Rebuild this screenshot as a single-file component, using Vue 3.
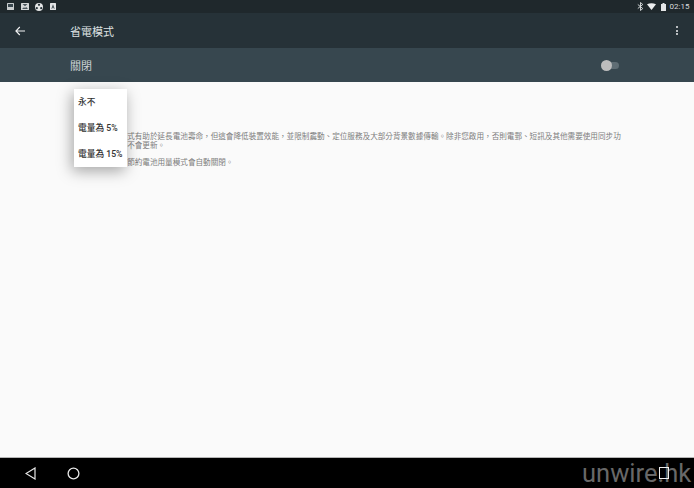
<template>
  <div class="screen">
    <div class="status-bar">
      <div class="status-left">
        <svg width="7" height="7" viewBox="0 0 7 7"><rect width="7" height="7" rx="0.500" fill="#c9cdcf" /><rect x="1" y="1" width="5" height="3" fill="#39474e" /></svg>
        <svg width="8" height="7" viewBox="0 0 8 7"><rect width="8" height="7" rx="0.500" fill="#d5d8d9" /><path d="M1.500 1h5L4 3.300zM1 6l2-1.800L4 5l1.200-1L7 6z" fill="#4a565c" /></svg>
        <svg width="8" height="8" viewBox="0 0 8 8"><circle cx="4" cy="4" r="4" fill="#e4e6e7" /><circle cx="4" cy="1.800" r="1.100" fill="#263238" /><circle cx="1.800" cy="5.200" r="1.100" fill="#263238" /><circle cx="6.200" cy="5.200" r="1.100" fill="#263238" /></svg>
        <svg width="6" height="7" viewBox="0 0 6 7"><rect width="6" height="7" rx="0.500" fill="#e4e6e7" /><path d="M3 1.300L1.300 5.700h.9l.3-.9h1l.3.9h.9z" fill="#4a565c" /></svg>
      </div>
      <div class="status-right">
        <svg class="bt" width="7" height="9" viewBox="0 0 7 9"><path d="M0.800 2.500l5 4-2.300 2V0.500l2.300 2-5 4" fill="none" stroke="#dfe2e3" stroke-width="0.900" /></svg>
        <svg class="wifi" width="9" height="7" viewBox="0 0 9 7"><path d="M0 1.300Q4.500-0.900 9 1.300L4.500 7z" fill="#eceeef" /></svg>
        <svg class="battery" width="5" height="8" viewBox="0 0 5 8"><path d="M1.500 0h2v1H5v7H0V1h1.500z" fill="#e4e6e7" /></svg>
        <span class="clock">02:15</span>
      </div>
    </div>

    <div class="toolbar">
      <svg class="back" width="10" height="10" viewBox="0 0 10 10"><path d="M10 5H1M4.800 1L0.900 5 4.800 9" fill="none" stroke="#f2f3f4" stroke-width="1.100" /></svg>
      <span class="title">省電模式</span>
      <div class="more"><i></i><i></i><i></i></div>
    </div>

    <div class="switch-bar">
      <span class="switch-label">關閉</span>
      <div class="switch"><div class="track"></div><div class="thumb"></div></div>
    </div>

    <div class="content">
      <p>節約電池用量模式有助於延長電池壽命，但這會降低裝置效能，並限制震動、定位服務及大部分背景數據傳輸。除非您啟用，否則電郵、短訊及其他需要使用同步功<br />能的應用程式將不會更新。</p>
      <p>當裝置充電時，節約電池用量模式會自動關閉。</p>
      <div class="menu">
        <div v-for="item in options" :key="item" class="menu-item">{{ item }}</div>
      </div>
    </div>

    <div class="nav-bar">
      <svg class="nav-back" width="11" height="13" viewBox="0 0 11 13"><path d="M10 1L1 6.500 10 12z" fill="none" stroke="#e8e8e8" stroke-width="1.200" /></svg>
      <svg class="nav-home" width="13" height="13" viewBox="0 0 13 13"><circle cx="6.500" cy="6.500" r="5.400" fill="none" stroke="#e8e8e8" stroke-width="1.300" /></svg>
      <div class="watermark">unwire.hk</div>
      <div class="nav-recent"></div>
    </div>
  </div>
</template>

<script setup>
const options = ['永不', '電量為 5%', '電量為 15%']
</script>

<style>
html,
body {
  margin: 0;
  background: #000;
}
</style>

<style scoped>
.screen {
  width: 694px;
  height: 488px;
  display: flex;
  flex-direction: column;
  overflow: hidden;
  font-family: "Roboto", "Noto Sans CJK TC", sans-serif;
  background: #fafafa;
}

.status-bar {
  height: 13px;
  flex: none;
  display: flex;
  justify-content: space-between;
  align-items: center;
  padding: 0 4.500px 0 7px;
  background: #1f282c;
}

.status-left,
.status-right {
  display: flex;
  align-items: center;
}

.status-left {
  gap: 6.500px;
}

.wifi {
  margin-left: 3px;
}

.battery {
  margin-left: 5px;
}

.clock {
  margin-left: 3.500px;
  font-size: 8px;
  color: #d9dcdd;
}

.toolbar {
  height: 35px;
  flex: none;
  display: flex;
  align-items: center;
  background: #263238;
}

.back {
  margin-left: 15px;
}

.title {
  margin-left: 45px;
  font-size: 11px;
  color: #dfe2e3;
}

.more {
  margin-left: auto;
  margin-right: 16px;
  display: flex;
  flex-direction: column;
  gap: 1.500px;
}

.more i {
  width: 2px;
  height: 2px;
  background: #eceeef;
  border-radius: 50%;
}

.switch-bar {
  height: 34px;
  flex: none;
  display: flex;
  align-items: center;
  background: #37474f;
}

.switch-label {
  margin-left: 70px;
  font-size: 11px;
  color: #cfd3d5;
}

.switch {
  position: relative;
  width: 19px;
  height: 11px;
  margin-left: auto;
  margin-right: 75px;
}

.track {
  position: absolute;
  left: 2px;
  right: 0;
  top: 2px;
  height: 7px;
  border-radius: 4px;
  background: #5f6d74;
}

.thumb {
  position: absolute;
  left: 1px;
  top: 0;
  width: 11px;
  height: 11px;
  border-radius: 50%;
  background: #bdbdbd;
}

.content {
  flex: 1;
  position: relative;
  padding: 49.500px 0 0 74px;
  font-size: 7.600px;
  line-height: 9.300px;
  color: #7d7d7d;
  border-bottom: 1px solid #b5b5b5;
}

.content p {
  margin: 0 0 8px;
  white-space: nowrap;
}

.menu {
  position: absolute;
  left: 74px;
  top: 7px;
  width: 53px;
  height: 78px;
  background: #fff;
  box-shadow: -2px 4px 14px rgba(0, 0, 0, 0.35);
}

.menu-item {
  height: 26px;
  line-height: 26px;
  padding-left: 4px;
  font-size: 8.700px;
  font-weight: 500;
  color: #333;
  white-space: nowrap;
}

.nav-bar {
  height: 30px;
  flex: none;
  position: relative;
  display: flex;
  align-items: center;
  background: #000;
}

.nav-back {
  margin-left: 25px;
}

.nav-home {
  margin-left: 31px;
}

.watermark {
  position: absolute;
  left: 582px;
  top: 2px;
  font-size: 25.500px;
  line-height: 27px;
  font-weight: 400;
  color: #686868;
  white-space: nowrap;
}

.nav-recent {
  position: absolute;
  left: 659px;
  top: 9px;
  width: 8px;
  height: 9.500px;
  border: 1.300px solid #efefef;
}
</style>
